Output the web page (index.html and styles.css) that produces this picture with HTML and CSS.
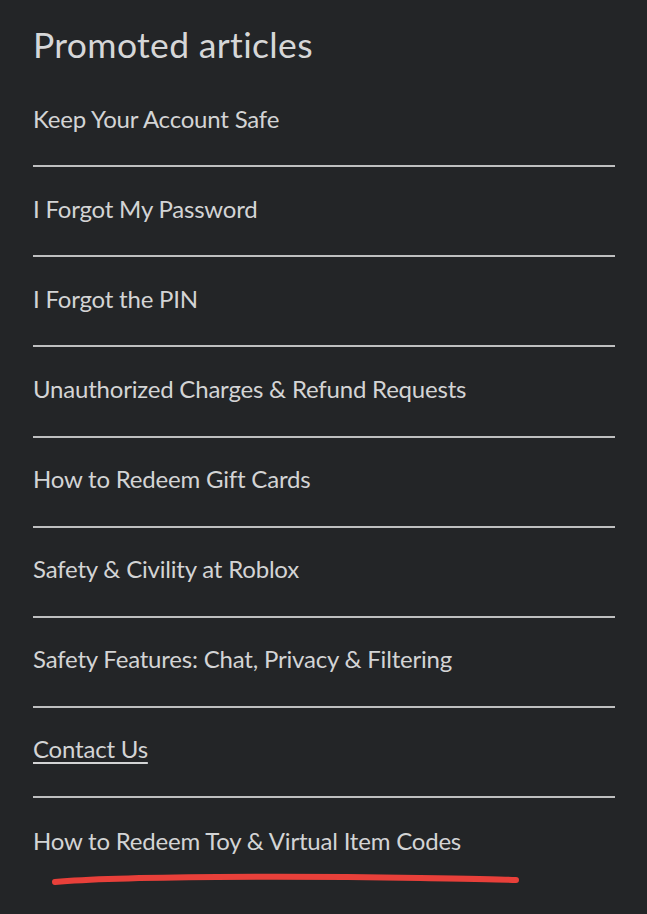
FILE: index.html
```html
<!DOCTYPE html>
<html lang="en">
<head>
<meta charset="utf-8">
<title>Promoted articles</title>
<link rel="stylesheet" href="styles.css">
</head>
<body>
<section class="promoted">
  <h2 class="promoted-title">Promoted articles</h2>
  <ul class="article-list">
    <li class="article-item"><a class="article-link" href="#">Keep Your Account Safe</a></li>
    <li class="article-item"><a class="article-link" href="#">I Forgot My Password</a></li>
    <li class="article-item"><a class="article-link" href="#">I Forgot the PIN</a></li>
    <li class="article-item"><a class="article-link" href="#">Unauthorized Charges &amp; Refund Requests</a></li>
    <li class="article-item"><a class="article-link" href="#">How to Redeem Gift Cards</a></li>
    <li class="article-item"><a class="article-link" href="#">Safety &amp; Civility at Roblox</a></li>
    <li class="article-item"><a class="article-link" href="#">Safety Features: Chat, Privacy &amp; Filtering</a></li>
    <li class="article-item"><a class="article-link is-underlined" href="#">Contact Us</a></li>
    <li class="article-item last"><a class="article-link" href="#">How to Redeem Toy &amp; Virtual Item Codes</a></li>
  </ul>
  <svg class="scribble" width="647" height="914" viewBox="0 0 647 914" aria-hidden="true">
    <path d="M55 882 C 120 876, 300 876, 420 878 S 505 880, 516 880" fill="none" stroke="#e8403a" stroke-width="6" stroke-linecap="round"/>
  </svg>
</section>
</body>
</html>
```

FILE: styles.css
```css
html, body {
  margin: 0;
  padding: 0;
  background: #232527;
}

body {
  font-family: "Lato", "Liberation Sans", sans-serif;
  color: #d3d4d5;
  width: 647px;
  height: 914px;
  overflow: hidden;
}

.promoted {
  position: relative;
  padding: 0 32px 0 33px;
}

.promoted-title {
  margin: 0;
  height: 77px;
  display: flex;
  align-items: center;
  padding-top: 12px;
  box-sizing: border-box;
  font-size: 35.5px;
  font-weight: 400;
  color: #d6d7d8;
  letter-spacing: 0.35px;
}

.article-list {
  list-style: none;
  margin: 0;
  padding: 0;
}

.article-item {
  box-sizing: border-box;
  height: 90.14px;
  padding-bottom: 6px;
  border-bottom: 2px solid #bebfc0;
  display: flex;
  align-items: center;
}

.article-item.last {
  border-bottom: none;
}

.article-link {
  color: #d3d4d5;
  text-decoration: none;
  font-size: 24px;
  letter-spacing: -0.2px;
}

.article-link.is-underlined {
  text-decoration: underline;
  text-decoration-thickness: 2px;
  text-underline-offset: 4px;
}

.scribble {
  position: absolute;
  left: 0;
  top: 0;
  pointer-events: none;
}
```
